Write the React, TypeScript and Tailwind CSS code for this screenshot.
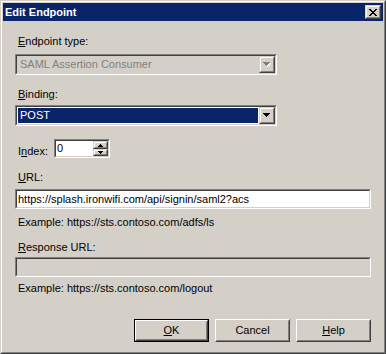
const sunkenOuter = "border border-t-[#808080] border-l-[#808080] border-r-white border-b-white";
const sunkenInner = "border border-t-[#404040] border-l-[#404040] border-r-[#d4d0c8] border-b-[#d4d0c8]";
const raisedOuter = "border border-t-[#d4d0c8] border-l-[#d4d0c8] border-r-[#404040] border-b-[#404040]";
const raisedInner = "border border-t-white border-l-white border-r-[#808080] border-b-[#808080]";

const CloseGlyph = () => (
    <svg width="8" height="7" viewBox="0 0 8 7" shapeRendering="crispEdges">
        <path d="M0 0h2v1H0zM6 0h2v1H6zM1 1h2v1H1zM5 1h2v1H5zM2 2h4v1H2zM3 3h2v1H3zM2 4h4v1H2zM1 5h2v1H1zM5 5h2v1H5zM0 6h2v1H0zM6 6h2v1H6z" fill="#000" />
    </svg>
);

const DownArrow = ({ disabled }: { disabled?: boolean }) => (
    <svg width="8" height="5" viewBox="0 0 8 5" shapeRendering="crispEdges">
        {disabled && <path d="M1 1h7v1H1zM2 2h5v1H2zM3 3h3v1H3zM4 4h1v1H4z" fill="#fff" />}
        <path d="M0 0h7v1H0zM1 1h5v1H1zM2 2h3v1H2zM3 3h1v1H3z" fill={disabled ? "#808080" : "#000"} />
    </svg>
);

const SpinArrow = ({ up }: { up?: boolean }) => (
    <svg width="5" height="3" viewBox="0 0 5 3" shapeRendering="crispEdges">
        <path d={up ? "M2 0h1v1H2zM1 1h3v1H1zM0 2h5v1H0z" : "M0 0h5v1H0zM1 1h3v1H1zM2 2h1v1H2z"} fill="#000" />
    </svg>
);

const Raised = ({ className, children }: { className: string; children?: React.ReactNode }) => (
    <div className={`${raisedOuter} ${className}`}>
        <div className={`${raisedInner} w-full h-full flex items-center justify-center bg-[#d4d0c8]`}>{children}</div>
    </div>
);

const Combo = ({ value, disabled }: { value: string; disabled?: boolean }) => (
    <div className={`${sunkenOuter} w-[262px] h-[21px]`}>
        <div className={`${sunkenInner} h-full flex ${disabled ? "bg-[#d4d0c8]" : "bg-white"}`}>
            <div className="flex-1 p-px">
                {disabled ? (
                    <div className="h-full flex items-center pl-[2px] text-[#808080]">{value}</div>
                ) : (
                    <div className="h-full flex items-center pl-[2px] bg-[#0a246a] text-white">{value}</div>
                )}
            </div>
            <Raised className="w-[16px] h-full">
                <DownArrow disabled={disabled} />
            </Raised>
        </div>
    </div>
);

const TextBox = ({ value, disabled }: { value?: string; disabled?: boolean }) => (
    <div className={`${sunkenOuter} w-full h-[20px]`}>
        <div className={`${sunkenInner} h-full flex items-center pl-[1px] ${disabled ? "bg-[#d4d0c8]" : "bg-white"}`}>
            {value}
        </div>
    </div>
);

const Label = ({ className = "", children }: { className?: string; children: React.ReactNode }) => (
    <div className={`pl-[3px] h-[13px] ${className}`}>{children}</div>
);

const Button = ({ children, isDefault }: { children: React.ReactNode; isDefault?: boolean }) => (
    <div className={`w-[75px] h-[23px] ${isDefault ? "border border-black" : ""}`}>
        <div className="w-full h-full border border-t-white border-l-white border-r-[#404040] border-b-[#404040]">
            <div className="w-full h-full border border-t-[#d4d0c8] border-l-[#d4d0c8] border-r-[#808080] border-b-[#808080] flex items-center justify-center">
                {children}
            </div>
        </div>
    </div>
);

export default function App() {
    return (
        <div className="w-[386px] h-[354px] border border-t-[#d4d0c8] border-l-[#d4d0c8] border-r-[#404040] border-b-[#404040] font-['Liberation_Sans',Arial,sans-serif] text-[11px] leading-[13px] text-black">
            <div className="h-full border border-t-white border-l-white border-r-[#808080] border-b-[#808080] bg-[#d4d0c8] p-px flex flex-col">
                {/* Title bar */}
                <div className="h-[18px] bg-[#0a246a] flex items-center justify-between pl-[2px] pr-[2px]">
                    <span className="text-white font-bold">Edit Endpoint</span>
                    <Raised className="w-[16px] h-[14px]">
                        <CloseGlyph />
                    </Raised>
                </div>

                <div className="flex flex-col px-[12px]">
                    <Label className="mt-[14px]"><span className="underline">E</span>ndpoint type:</Label>
                    <div className="mt-[6px]">
                        <Combo value="SAML Assertion Consumer" disabled />
                    </div>

                    <Label className="mt-[13px]"><span className="underline">B</span>inding:</Label>
                    <div className="mt-[4px]">
                        <Combo value="POST" />
                    </div>

                    {/* Index spinner */}
                    <div className="mt-[13px] flex items-start h-[19px]">
                        <div className="ml-[3px] w-[36px] mt-[6px]">I<span className="underline">n</span>dex:</div>
                        <div className={`${sunkenOuter} w-[56px] h-[19px]`}>
                            <div className={`${sunkenInner} h-full flex bg-white`}>
                                <div className="flex-1 flex items-center pl-[1px]">0</div>
                                <div className="w-[15px] flex flex-col">
                                    <Raised className="w-full h-[8px]"><SpinArrow up /></Raised>
                                    <Raised className="w-full h-[7px]"><SpinArrow /></Raised>
                                </div>
                            </div>
                        </div>
                    </div>

                    <Label className="mt-[13px]"><span className="underline">U</span>RL:</Label>
                    <div className="mt-[5px]">
                        <TextBox value="https://splash.ironwifi.com/api/signin/saml2?acs" />
                    </div>
                    <Label className="mt-[7px]">Example: https://sts.contoso.com/adfs/ls</Label>

                    <Label className="mt-[12px]"><span className="underline">R</span>esponse URL:</Label>
                    <div className="mt-[3px]">
                        <TextBox disabled />
                    </div>
                    <Label className="mt-[5px]">Example: https://sts.contoso.com/logout</Label>

                    <div className="mt-[24px] flex justify-end gap-[6px]">
                        <Button isDefault><span className="underline">O</span>K</Button>
                        <Button>Cancel</Button>
                        <Button><span className="underline">H</span>elp</Button>
                    </div>
                </div>
            </div>
        </div>
    );
}
